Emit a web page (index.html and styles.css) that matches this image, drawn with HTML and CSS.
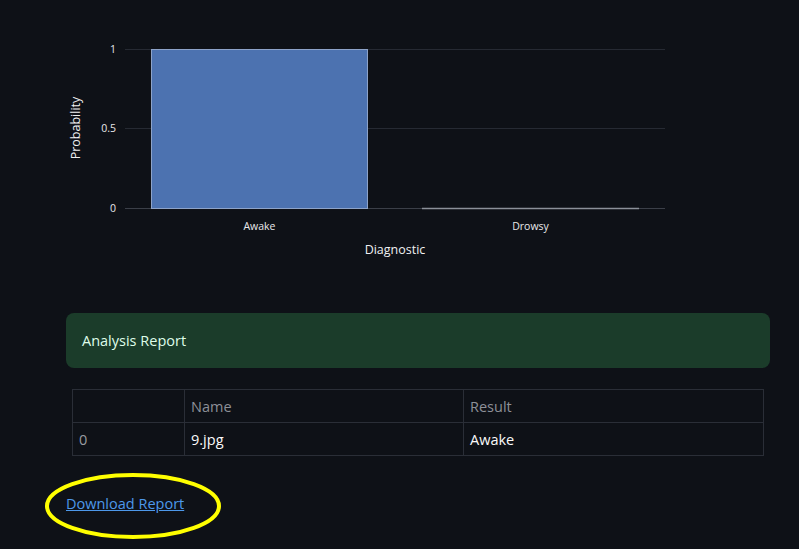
FILE: index.html
```html
<!DOCTYPE html>
<html>
<head>
<meta charset="utf-8">
<link rel="stylesheet" href="styles.css">
</head>
<body>
<div class="page">
  <svg class="chart" width="799" height="270" viewBox="0 0 799 270">
    <line class="grid" x1="125" y1="128.5" x2="665" y2="128.5"/>
    <line class="grid" x1="125" y1="49.5" x2="665" y2="49.5"/>
    <line class="zero" x1="125" y1="208.5" x2="665" y2="208.5"/>
    <rect class="bar" x="151.5" y="49.5" width="216" height="159"/>
    <line class="bar0" x1="422" y1="208.5" x2="639" y2="208.5"/>
    <text class="tick" x="116" y="53" text-anchor="end">1</text>
    <text class="tick" x="116" y="132" text-anchor="end">0.5</text>
    <text class="tick" x="116" y="212" text-anchor="end">0</text>
    <text class="tick" x="259.5" y="230" text-anchor="middle">Awake</text>
    <text class="tick" x="530.5" y="230" text-anchor="middle">Drowsy</text>
    <text class="title" x="395" y="254" text-anchor="middle">Diagnostic</text>
    <text class="title" x="0" y="0" text-anchor="middle" transform="translate(80 128) rotate(-90)">Probability</text>
  </svg>

  <div class="content">
    <div class="alert">Analysis Report</div>
    <div class="table-wrap">
      <table class="df">
        <thead>
          <tr><th class="idx"></th><th class="c1">Name</th><th class="c2">Result</th></tr>
        </thead>
        <tbody>
          <tr><td class="idx">0</td><td>9.jpg</td><td>Awake</td></tr>
        </tbody>
      </table>
    </div>
    <div class="dl">
      <a href="#" class="link">Download Report</a>
      <svg class="mark" width="184" height="72" viewBox="0 0 184 72">
        <ellipse cx="92" cy="36" rx="86" ry="31" fill="none" stroke="#ffff00" stroke-width="4"/>
      </svg>
    </div>
  </div>
</div>
</body>
</html>
```
FILE: styles.css
```css
html, body {
  margin: 0;
  padding: 0;
  background: #0e1117;
}
body {
  font-family: "Open Sans", "Noto Sans", sans-serif;
  color: #fafafa;
  width: 799px;
  height: 549px;
  overflow: hidden;
}
.page {
  display: flex;
  flex-direction: column;
}
.chart {
  display: block;
}
.chart .grid {
  stroke: #262a33;
  stroke-width: 1;
}
.chart .zero {
  stroke: #3b3f48;
  stroke-width: 1;
}
.chart .bar {
  fill: #4c72b0;
  stroke: #8da3c9;
  stroke-width: 1;
}
.chart .bar0 {
  stroke: #8b9099;
  stroke-width: 1.5;
}
.chart .tick {
  fill: #e8e8ea;
  font-family: "Open Sans", sans-serif;
  font-size: 10.5px;
}
.chart .title {
  fill: #f0f0f2;
  font-family: "Open Sans", sans-serif;
  font-size: 12.5px;
}
.content {
  margin: 43px 29px 0 66px;
  display: flex;
  flex-direction: column;
}
.alert {
  background: #1b3c2a;
  color: #dffde9;
  border-radius: 8px;
  height: 55px;
  display: flex;
  align-items: center;
  padding: 0 16px;
  font-size: 14.5px;
}
.table-wrap {
  margin: 21px 6px 0 6px;
}
.df {
  width: 100%;
  border-collapse: collapse;
  font-size: 14.5px;
}
.df th, .df td {
  border: 1px solid #2a2e37;
  height: 32px;
  padding: 0 6px;
  text-align: left;
  font-weight: normal;
}
.df th {
  color: #8d9097;
}
.df td {
  color: #fafafa;
}
.df .idx {
  width: 99px;
}
.df td.idx {
  color: #9a9ca2;
}
.df .c1 {
  width: 266px;
}
.dl {
  position: relative;
  margin-top: 36px;
  height: 30px;
}
.link {
  color: #4d98ea;
  font-size: 14.5px;
  text-decoration: underline;
}
.mark {
  position: absolute;
  left: -25px;
  top: -22px;
}
```
